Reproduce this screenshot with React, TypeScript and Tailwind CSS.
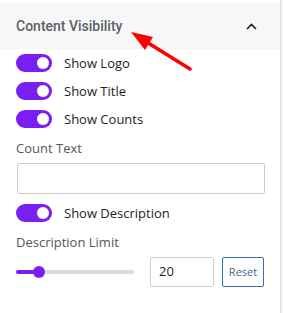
import React from "react";

function Toggle() {
  return (
    <div className="relative h-[18px] w-[36px] shrink-0 rounded-full bg-[#7a1ff2]">
      <div className="absolute right-[3px] top-[3px] h-[12px] w-[12px] rounded-full bg-white" />
    </div>
  );
}

function ToggleRow({ label }: { label: string }) {
  return (
    <div className="flex h-[18px] items-center gap-[12px]">
      <Toggle />
      <span className="text-[13px] leading-[18px] text-[#1e1e1e]">{label}</span>
    </div>
  );
}

export default function App() {
  return (
    <div className="relative h-[313px] w-[283px] bg-white" style={{ fontFamily: '"Open Sans", "Noto Sans", sans-serif' }}>
      <div className="flex h-full">
        <div className="w-[280px] pt-[3px]">
          <div className="flex h-[46px] items-center justify-between bg-[#f7f7f7] pl-[16px] pr-[23px]">
            <span className="text-[14px] font-medium text-[#5a6168]" style={{ fontFamily: 'Roboto, sans-serif' }}>
              Content Visibility
            </span>
            <svg width="11" height="7" viewBox="0 0 11 7" fill="none">
              <path d="M1 6 L5.5 1.5 L10 6" stroke="#1e1e1e" strokeWidth="1.6" />
            </svg>
          </div>
          <div className="flex flex-col pl-[16px] pr-[16px] pt-[5px]">
            <div className="flex flex-col gap-[10px]">
              <ToggleRow label="Show Logo" />
              <ToggleRow label="Show Title" />
              <ToggleRow label="Show Counts" />
            </div>
            <div className="mt-[11px] text-[13px] leading-[18px] text-[#50575e]">Count Text</div>
            <div className="mt-[6px] ml-[1px] h-[31px] w-[248px] rounded-[2px] border border-[#cccccc] bg-white" />
            <div className="mt-[10px]">
              <ToggleRow label="Show Description" />
            </div>
            <div className="mt-[11px] text-[13px] leading-[18px] text-[#50575e]">Description Limit</div>
            <div className="mt-[6px] flex h-[30px] items-center">
              <div className="relative h-[4px] w-[118px] rounded-full bg-[#dcdcde]">
                <div className="absolute left-0 top-0 h-[4px] w-[23px] rounded-full bg-[#7a1ff2]" />
                <div className="absolute left-[17px] top-[-4px] h-[12px] w-[12px] rounded-full bg-[#7a1ff2]" />
              </div>
              <div className="ml-[16px] flex h-[30px] w-[64px] items-center rounded-[2px] border border-[#d0d0d0] pl-[8px] text-[13px] text-[#1e1e1e]">
                20
              </div>
              <div className="ml-[8px] flex h-[30px] w-[42px] items-center justify-center rounded-[2px] border border-[#3c6db5] text-[11px] text-[#4a6690]">
                Reset
              </div>
            </div>
          </div>
        </div>
        <div className="w-[3px] border-l border-[#e2e2e2] bg-[#f1f1f1]" />
      </div>
      <svg className="pointer-events-none absolute left-0 top-0" width="283" height="313">
        <line x1="190" y1="69" x2="145" y2="41" stroke="#ff0000" strokeWidth="3.5" strokeLinecap="round" />
        <polygon points="131,32 153,37 145,50" fill="#ff0000" />
      </svg>
    </div>
  );
}
